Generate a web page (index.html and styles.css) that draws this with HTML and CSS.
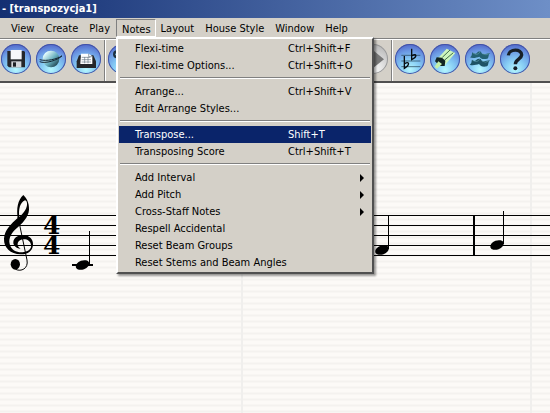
FILE: index.html
```html
<!DOCTYPE html>
<html lang="en">
<head>
<meta charset="utf-8">
<title>transpozycja1</title>
<link rel="stylesheet" href="styles.css">
</head>
<body>
<header class="titlebar">- [transpozycja1]</header>
<nav class="menubar">
  <button class="menu-title">View</button>
  <button class="menu-title">Create</button>
  <button class="menu-title">Play</button>
  <div class="menu-holder">
    <button class="menu-title open" aria-expanded="true">Notes</button>
    <div class="dropdown">
      <button class="item"><span>Flexi-time</span><span class="key">Ctrl+Shift+F</span></button>
      <button class="item"><span>Flexi-time Options...</span><span class="key">Ctrl+Shift+O</span></button>
      <hr>
      <button class="item"><span>Arrange...</span><span class="key">Ctrl+Shift+V</span></button>
      <button class="item"><span>Edit Arrange Styles...</span></button>
      <hr>
      <button class="item selected"><span>Transpose...</span><span class="key">Shift+T</span></button>
      <button class="item"><span>Transposing Score</span><span class="key">Ctrl+Shift+T</span></button>
      <hr>
      <button class="item sub"><span>Add Interval</span></button>
      <button class="item sub"><span>Add Pitch</span></button>
      <button class="item sub"><span>Cross-Staff Notes</span></button>
      <button class="item"><span>Respell Accidental</span></button>
      <button class="item"><span>Reset Beam Groups</span></button>
      <button class="item"><span>Reset Stems and Beam Angles</span></button>
    </div>
  </div>
  <button class="menu-title">Layout</button>
  <button class="menu-title">House Style</button>
  <button class="menu-title">Window</button>
  <button class="menu-title">Help</button>
</nav>
<div class="toolbar">
  <div class="group">
    <button class="tool" aria-label="Save"><svg viewBox="0 0 90 90"><path d="M19 21H69L72 24V70H24L19 65Z" fill="#25272b"/><path d="M29 18H62V46H29Z" fill="#f7f7fa"/><path d="M31 52H61V70H31Z" fill="#d2d5d9"/><path d="M36 55H45V68H36Z" fill="#1d2025"/></svg></button>
    <button class="tool" aria-label="Web"><svg viewBox="0 0 90 90"><defs><linearGradient id="ball" x2="1" y2="1"><stop offset=".15" stop-color="#eaffff"/><stop offset=".55" stop-color="#67aebd"/><stop offset="1" stop-color="#061c29"/></linearGradient></defs><circle cx="45" cy="45" r="25" fill="url(#ball)"/><path d="M11 53C27 60 66 49 78 35M11 47C32 53 63 45 78 36" fill="none" stroke="#172835" stroke-width="3"/></svg></button>
    <button class="tool" aria-label="Print"><svg viewBox="0 0 90 90"><path d="M17 52L24 34H67L75 52V72H17Z" fill="#25272a"/><path d="M30 29H53L64 37V60H28Z" fill="#fff"/><path d="M53 29V38H64M32 40H58M32 47H60M32 54H60M41 39V58M51 39V58" fill="none" stroke="#667683" stroke-width="2"/></svg></button>
  </div>
  <div class="group middle">
    <button class="tool" aria-label="Find"><svg viewBox="0 0 90 90"><circle cx="27" cy="31" r="12" fill="#203241"/><circle cx="27" cy="31" r="5" fill="#78bddd"/><path d="M34 38L70 70" stroke="#203241" stroke-width="9"/></svg></button>
    <button class="tool gray" aria-label="Forward"><svg viewBox="0 0 90 90"><path d="M15 34H48V21L78 46L48 70V55H15Z" fill="#777"/></svg></button>
  </div>
  <div class="group">
    <button class="tool" aria-label="Transposing score"><svg viewBox="0 0 90 90"><path d="M19 34H76M19 51H76M19 68H76" stroke="#203b4c" stroke-width="2"/><path d="M50 14V47C68 38 65 27 51 35M28 36V73C46 62 43 50 29 59" fill="none" stroke="#080d12" stroke-width="4"/></svg></button>
    <button class="tool" aria-label="Highlight"><svg viewBox="0 0 90 90"><path d="M25 42L50 14L76 27L45 63Z" fill="#cdf5bd"/><path d="M37 40L60 18M43 49L70 26" stroke="#416d4a" stroke-width="3"/><path d="M20 40L36 41L46 50L44 66L30 66L15 52Z" fill="#132523"/><path d="M25 52L36 60L21 74L14 68Z" fill="#c4efa8"/></svg></button>
    <button class="tool" aria-label="Waves"><svg viewBox="0 0 90 90"><path d="M22 25C38 37 32 19 48 23C52 36 62 28 76 27C69 29 73 41 67 44C54 47 48 45 43 38C36 40 24 45 15 40C22 37 20 29 22 25Z" fill="#246172"/><path d="M21 47C35 58 32 40 47 45C51 57 62 50 76 49C68 52 72 63 66 67C52 70 47 66 42 60C34 62 23 66 14 62C21 58 19 51 21 47Z" fill="#1d5364"/><path d="M24 27Q38 36 45 24M23 49Q37 57 44 46M52 29Q64 36 72 29M51 51Q63 58 71 51" fill="none" stroke="#609eaa" stroke-width="2"/></svg></button>
    <button class="tool" aria-label="Help"><svg viewBox="0 0 90 90"><path d="M25 34C26 14 66 13 65 33C64 46 46 45 46 61" fill="none" stroke="#182028" stroke-width="10"/><circle cx="46" cy="73" r="6" fill="#182028"/></svg></button>
  </div>
</div>
<main class="score">
  <svg class="music" width="100%" height="240" role="img" aria-label="Staff in four four time">
    <path d="M0 132.5H4000M0 142.5H4000M0 152.5H4000M0 162.5H4000M0 172.5H4000" stroke="#000"/>
    <g transform="translate(0 102) scale(.33333)">
      <path fill-rule="evenodd" d="M70 30C79 39 88 53 87 74C86 96 66 116 50 130C34 144 25 160 29 177C34 199 56 204 72 201C88 198 95 189 93 179C91 169 83 163 72 163C59 163 52 171 53 180C54 186 58 189 62 191C47 190 39 180 40 171C41 158 54 149 71 150C89 151 100 164 99 179C98 199 81 209 62 208C31 207 11 188 12 161C13 137 33 116 53 99C49 72 53 45 70 30ZM75 46C60 52 55 74 58 96C72 84 83 68 81 54C80 49 78 46 75 46Z"/>
      <path d="M54 96L81 225C86 251 63 261 47 253" fill="none" stroke="#000" stroke-width="3"/>
      <ellipse cx="46" cy="238" rx="14" ry="16"/>
    </g>
    <text class="meter" x="43" y="151">4</text>
    <text class="meter" x="43" y="171">4</text>
    <path d="M72 182H93" stroke="#000" stroke-width="2"/>
    <ellipse cx="82.500" cy="182" rx="7" ry="4.500" transform="rotate(-20 82.500 182)"/>
    <path d="M89.500 148V181" stroke="#000"/>
    <ellipse cx="382" cy="167" rx="7" ry="4.500" transform="rotate(-20 382 167)"/>
    <path d="M388.500 132V166" stroke="#000"/>
    <path d="M474 132V173" stroke="#000" stroke-width="2"/>
    <ellipse cx="497" cy="162" rx="7" ry="4.500" transform="rotate(-20 497 162)"/>
    <path d="M503.500 128V161" stroke="#000"/>
  </svg>
</main>
</body>
</html>
```
FILE: styles.css
```css
* { box-sizing: border-box; }

body {
  margin: 0;
  min-height: 100vh;
  display: flex;
  flex-direction: column;
  background: #d4d0c8;
  color: #000;
  font: 11px/17px "DejaVu Sans Condensed", "DejaVu Sans", sans-serif;
  font-stretch: condensed;
  overflow: hidden;
}

button {
  font: inherit;
  color: inherit;
  background: none;
  border: 0;
  padding: 0;
  text-align: left;
}

.titlebar {
  height: 18px;
  padding-left: 2px;
  color: #fff;
  font-weight: bold;
  line-height: 18px;
  background: linear-gradient(90deg, #142f72, #6e8fc7);
}

.menubar {
  display: flex;
  height: 20px;
  padding: 1px 0 1px 6px;
}

.menu-title {
  height: 18px;
  padding: 0 6px 0 5px;
  white-space: nowrap;
}

.menu-holder { position: relative; }

.menu-title.open {
  padding: 1px 4px 0 5px;
  border: 1px solid;
  border-color: #808080 #fff #fff #808080;
}

.dropdown {
  position: absolute;
  z-index: 2;
  top: 18px;
  left: 0;
  width: 258px;
  padding: 1px;
  background: #d4d0c8;
  border: 2px solid;
  border-color: #fff #505050 #505050 #fff;
  box-shadow: 2px 2px 2px #0006;
}

.item {
  display: flex;
  align-items: center;
  width: 100%;
  height: 17px;
  padding: 0 7px 0 16px;
  white-space: nowrap;
}

.item span:first-child { flex: 1; }
.item .key { width: 76px; }

.selected {
  background: #0a246a;
  color: #fff;
}

.sub::after {
  content: "";
  border: 4px solid transparent;
  border-left-color: #000;
  border-right: 0;
}

hr {
  height: 2px;
  margin: 3px 1px 4px;
  border: 0;
  border-top: 1px solid #808080;
  border-bottom: 1px solid #fff;
}

.toolbar {
  display: flex;
  height: 45px;
  padding: 5px 0 0 1px;
  border-top: 1px solid #808080;
  border-bottom: 2px solid #505050;
  box-shadow: inset 0 1px #fff;
}

.group {
  display: flex;
  gap: 5px;
  height: 30px;
}

.group + .group {
  margin-left: 3px;
  padding-left: 4px;
  position: relative;
}

.group + .group::before {
  content: "";
  position: absolute;
  left: 0;
  top: -4px;
  height: 41px;
  border-left: 1px solid #808080;
  border-right: 1px solid #fff;
}

.middle {
  width: 284px;
  justify-content: space-between;
}

.tool {
  width: 30px;
  height: 30px;
  border-radius: 50%;
  background: radial-gradient(circle at 50% 85%, #b5f7ff 0, #84c9f3 35%, #6c9ae4 62%, #4149bb 100%);
  box-shadow: inset 0 0 0 1px #4352a5;
}

.tool svg {
  display: block;
  width: 30px;
  height: 30px;
}

.tool.gray {
  background: radial-gradient(circle at 50% 85%, #fff, #aaa);
  box-shadow: inset 0 0 0 1px #999;
}

.score {
  flex: 1;
  background:
    repeating-linear-gradient(90deg, transparent 0 241px, #f0efed 241px 243px, transparent 243px 289px),
    repeating-linear-gradient(#fcfaf7 0 3px, #f4f2ef 4px 5px, #fcfaf7 6px);
}

.music { display: block; }

.meter {
  font: bold 25px "DejaVu Serif", serif;
}
```
